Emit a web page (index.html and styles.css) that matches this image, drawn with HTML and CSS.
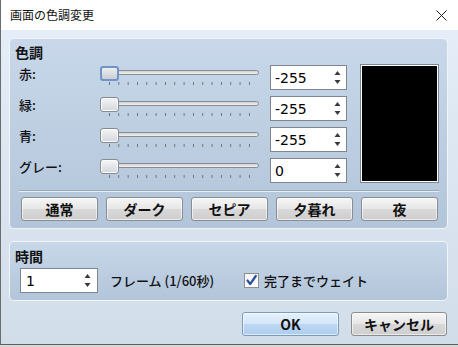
FILE: index.html
```html
<!DOCTYPE html>
<html lang="ja">

<head>
  <meta charset="UTF-8">
  <meta name="viewport" content="width=device-width, initial-scale=1.0">
  <title>画面の色調変更</title>
  <link rel="stylesheet" href="styles.css">
</head>

<body>
  <div class="window">
    <div class="titlebar">
      <span class="title">画面の色調変更</span>
      <svg class="close" width="11" height="11" viewBox="0 0 11 11">
        <path d="M0.5 0.5L10.5 10.5M10.5 0.5L0.5 10.5" stroke="#1a1a1a" stroke-width="1" fill="none" />
      </svg>
    </div>

    <div class="client">
      <!-- 色調 -->
      <div class="group">
        <div class="group-title">色調</div>
        <div class="tone">
          <div class="rows">
            <div class="row">
              <span class="label">赤:</span>
              <div class="slider focused">
                <div class="track"></div>
                <div class="ticks"></div>
                <div class="knob"></div>
              </div>
              <div class="spin">
                <span>-255</span>
                <svg class="arrows" width="7" height="16" viewBox="0 0 7 16">
                  <polygon points="0.5,5 3.5,1 6.5,5" fill="#3a3a3a" />
                  <polygon points="0.5,10 3.5,14 6.5,10" fill="#3a3a3a" />
                </svg>
              </div>
            </div>
            <div class="row">
              <span class="label">緑:</span>
              <div class="slider">
                <div class="track"></div>
                <div class="ticks"></div>
                <div class="knob"></div>
              </div>
              <div class="spin">
                <span>-255</span>
                <svg class="arrows" width="7" height="16" viewBox="0 0 7 16">
                  <polygon points="0.5,5 3.5,1 6.5,5" fill="#3a3a3a" />
                  <polygon points="0.5,10 3.5,14 6.5,10" fill="#3a3a3a" />
                </svg>
              </div>
            </div>
            <div class="row">
              <span class="label">青:</span>
              <div class="slider">
                <div class="track"></div>
                <div class="ticks"></div>
                <div class="knob"></div>
              </div>
              <div class="spin">
                <span>-255</span>
                <svg class="arrows" width="7" height="16" viewBox="0 0 7 16">
                  <polygon points="0.5,5 3.5,1 6.5,5" fill="#3a3a3a" />
                  <polygon points="0.5,10 3.5,14 6.5,10" fill="#3a3a3a" />
                </svg>
              </div>
            </div>
            <div class="row">
              <span class="label">グレー:</span>
              <div class="slider">
                <div class="track"></div>
                <div class="ticks"></div>
                <div class="knob"></div>
              </div>
              <div class="spin">
                <span>0</span>
                <svg class="arrows" width="7" height="16" viewBox="0 0 7 16">
                  <polygon points="0.5,5 3.5,1 6.5,5" fill="#3a3a3a" />
                  <polygon points="0.5,10 3.5,14 6.5,10" fill="#3a3a3a" />
                </svg>
              </div>
            </div>
          </div>
          <div class="preview"></div>
        </div>
        <div class="separator"></div>
        <div class="presets">
          <button class="btn">通常</button>
          <button class="btn">ダーク</button>
          <button class="btn">セピア</button>
          <button class="btn">夕暮れ</button>
          <button class="btn">夜</button>
        </div>
      </div>

      <!-- 時間 -->
      <div class="group time-group">
        <div class="group-title">時間</div>
        <div class="time-row">
          <div class="spin frame-spin">
            <span>1</span>
            <svg class="arrows" width="7" height="16" viewBox="0 0 7 16">
              <polygon points="0.5,5 3.5,1 6.5,5" fill="#3a3a3a" />
              <polygon points="0.5,10 3.5,14 6.5,10" fill="#3a3a3a" />
            </svg>
          </div>
          <span class="frames">フレーム (1/60秒)</span>
          <label class="check">
            <span class="box">
              <svg width="13" height="13" viewBox="0 0 13 13">
                <path d="M2.5 6.5L5.2 10L10.8 2" stroke="#2c4f9e" stroke-width="2.2" fill="none" stroke-linecap="round" stroke-linejoin="round" />
              </svg>
            </span>
            完了までウェイト
          </label>
        </div>
      </div>

      <div class="actions">
        <button class="btn ok">OK</button>
        <button class="btn cancel">キャンセル</button>
      </div>
    </div>
  </div>
</body>

</html>
```

FILE: styles.css
```css
* {
  margin: 0;
  padding: 0;
  box-sizing: border-box;
}

body {
  width: 458px;
  height: 347px;
  overflow: hidden;
  background: #d9d9d9;
  font-family: "Noto Sans CJK JP", sans-serif;
  font-size: 13px;
  font-weight: 500;
  color: #111;
}

.window {
  width: 458px;
  height: 345px;
  display: flex;
  flex-direction: column;
  border-left: 1px solid #6c6c6c;
  border-bottom: 1px solid #5f5f5f;
}

/* タイトルバー */
.titlebar {
  height: 30px;
  flex-shrink: 0;
  display: flex;
  align-items: center;
  justify-content: space-between;
  padding: 0 11px 0 9px;
  background: #fff;
}

.title {
  font-size: 12px;
  font-weight: 400;
  line-height: 16px;
}

.close {
  display: block;
}

.client {
  flex: 1;
  padding: 8px 10px 0 8px;
  background: linear-gradient(#e4edf8, #d1dde9);
}

/* グループ枠 */
.group {
  border: 1px solid #f1f5fa;
  border-radius: 5px;
  background: linear-gradient(#c8d8ea, #b3c5da);
  padding: 4px 8px 7px 5px;
}

.group-title {
  font-size: 14px;
  font-weight: bold;
  line-height: 18px;
}

.tone {
  display: flex;
  margin: 3px 0 0 4px;
}

.row {
  display: flex;
  align-items: flex-start;
  height: 31px;
}

.label {
  width: 81px;
  line-height: 20px;
}

/* スライダー */
.slider {
  position: relative;
  width: 159px;
  height: 31px;
}

.track {
  height: 5px;
  margin: 6px 0 0 2px;
  border: 1px solid #8c8c8c;
  border-radius: 3px;
  background: linear-gradient(#cfd2d5, #eef0f2);
}

.ticks {
  width: 141px;
  height: 3px;
  margin: 7px 0 0 9px;
  background: linear-gradient(90deg, #6e6e6e 0 1px, transparent 1px) 0 0 / 9.333px 3px repeat-x;
}

.knob {
  position: absolute;
  left: 0;
  top: 2px;
  width: 19px;
  height: 15px;
  border: 1px solid #878a8e;
  border-radius: 3px;
  background: linear-gradient(#f4f5f6, #d3d7dc);
  box-shadow: inset 0 0 0 1px #fbfbfb;
}

.slider.focused .knob {
  border: 2px solid #6e95c5;
  background: linear-gradient(#eceef0, #c9ced4);
  box-shadow: none;
}

/* スピンボックス */
.spin {
  display: flex;
  align-items: center;
  justify-content: space-between;
  width: 77px;
  height: 25px;
  margin: 1px 0 0 11px;
  padding: 0 5px 0 4px;
  border: 1px solid #7f858c;
  background: #fff;
  font-family: "DejaVu Sans", "Noto Sans CJK JP", sans-serif;
  font-size: 14px;
  font-weight: 400;
  color: #000;
}

.arrows {
  display: block;
}

.preview {
  width: 79px;
  height: 119px;
  margin-left: 13px;
  border: 1px solid #7c8691;
  background: #000;
  box-shadow: inset 0 0 0 1px #fff;
}

.separator {
  height: 2px;
  margin: 2px 0 0 4px;
  border-top: 1px solid #98a7b9;
  border-bottom: 1px solid #e9eff6;
}

.presets {
  display: flex;
  gap: 8px;
  margin: 5px 0 0 6px;
}

/* ボタン */
.btn {
  width: 77px;
  height: 24px;
  border: 1px solid #8a8c8f;
  border-radius: 3px;
  background: linear-gradient(#f6f6f6, #e6e6e6 50%, #d8d8d8 52%, #cecece);
  box-shadow: inset 0 0 0 1px rgba(255, 255, 255, 0.6);
  font-family: "Noto Sans CJK JP", sans-serif;
  font-size: 14px;
  font-weight: bold;
  line-height: 20px;
  color: #111;
}

/* 時間 */
.time-group {
  margin-top: 12px;
  padding-top: 5px;
}

.time-row {
  display: flex;
  align-items: center;
  margin-top: 3px;
}

.spin.frame-spin {
  width: 78px;
  margin: 0 0 0 5px;
  padding-left: 5px;
  padding-right: 6px;
}

.frames {
  width: 134px;
  margin-left: 12px;
  line-height: 20px;
}

.check {
  display: flex;
  align-items: center;
  gap: 5px;
  line-height: 20px;
}

.box {
  display: flex;
  align-items: center;
  justify-content: center;
  width: 15px;
  height: 15px;
  border: 1px solid #8e8f8f;
  background: linear-gradient(#f4f4f4, #ffffff);
}

.box svg {
  display: block;
}

.actions {
  display: flex;
  justify-content: flex-end;
  gap: 12px;
  margin-top: 11px;
  padding-right: 1px;
}

.btn.ok {
  width: 97px;
  border-color: #7b9cc1;
  background: linear-gradient(#e6f1fc, #d3e6f8 50%, #bcd7f2 52%, #aecdee);
}

.btn.cancel {
  width: 96px;
}
```
